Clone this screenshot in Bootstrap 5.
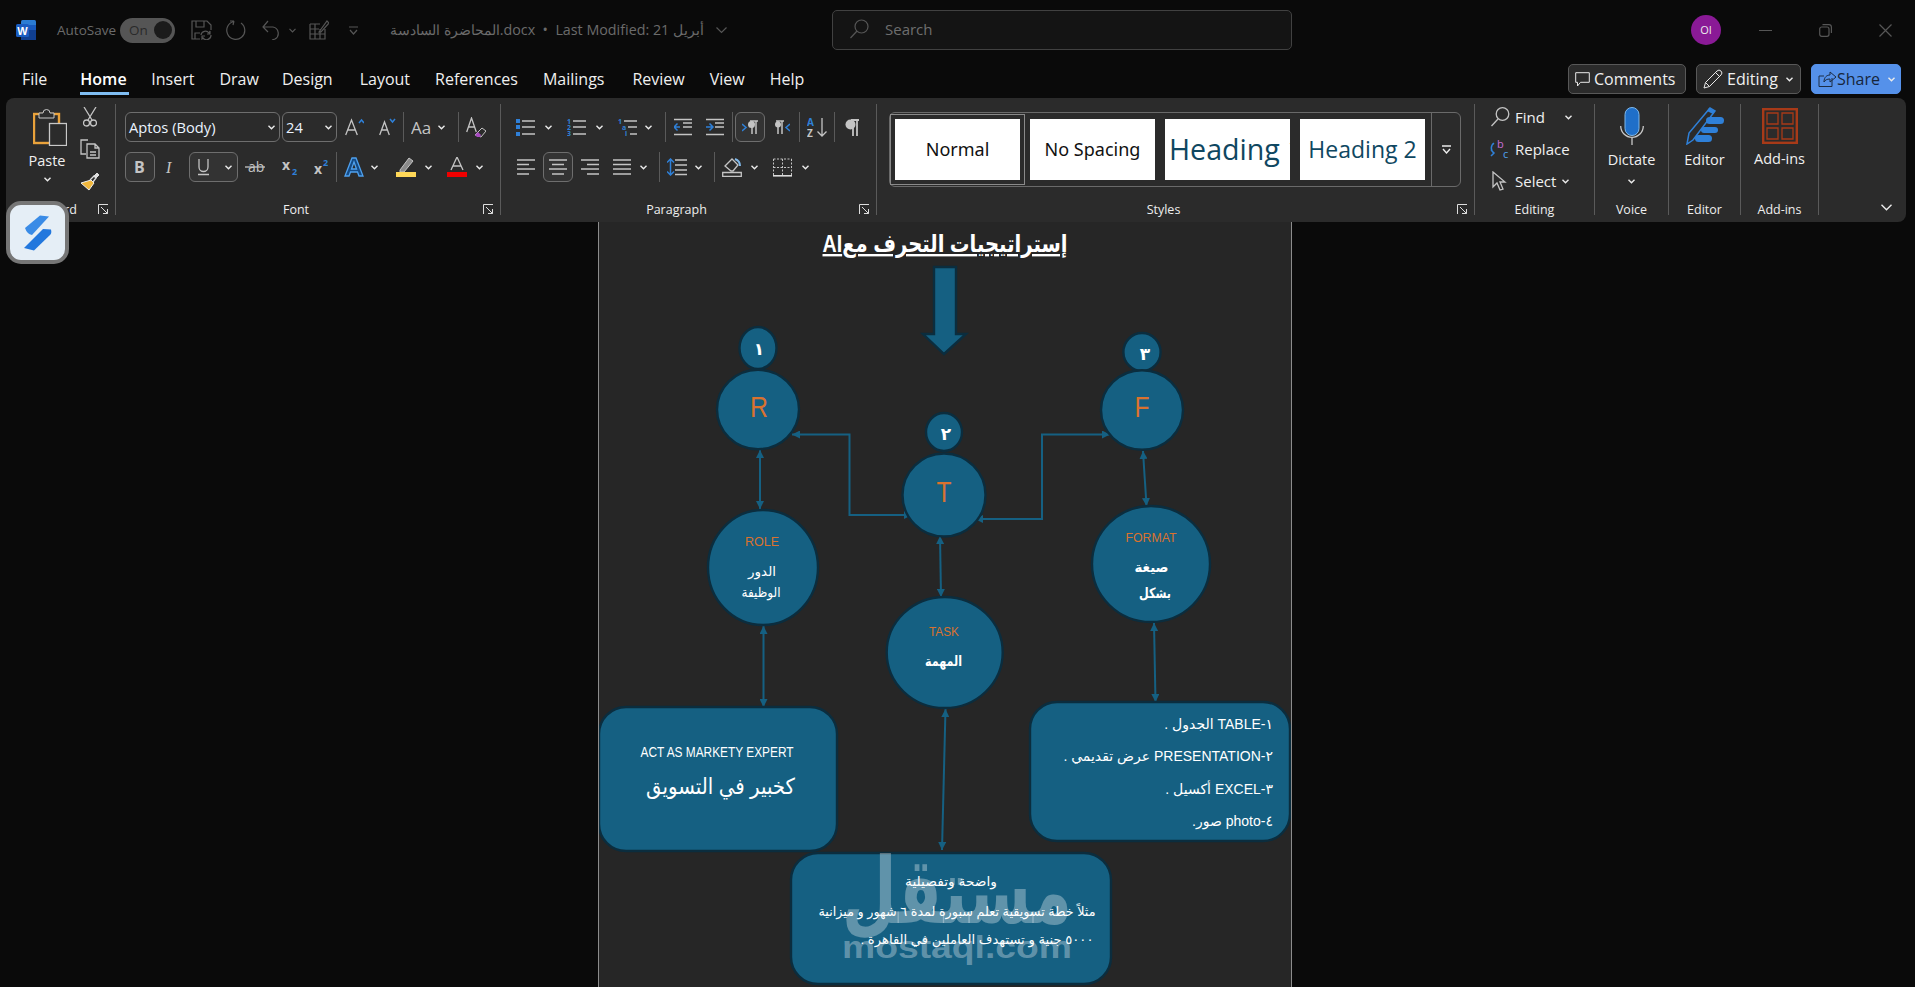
<!DOCTYPE html>
<html lang="en">
<head>
<meta charset="utf-8">
<title>Word</title>
<link href="https://cdn.jsdelivr.net/npm/bootstrap@5.3.0/dist/css/bootstrap.min.css" rel="stylesheet">
<style>
html,body{height:100%;overflow:hidden}
body{background:#0a0a0a;color:#f2f2f2;font-family:"Open Sans","Noto Sans",sans-serif;font-size:14px;position:relative}
svg{display:block;flex:none}
.titlebar{height:60px;padding-left:16px}
.dim{color:#6b6b6b;font-size:14.3px;white-space:nowrap}
.autosave{margin-left:21px;width:54px;font-size:13.5px}
.toggle{width:55px;height:25px;margin-left:9px;background:#555;border-radius:13px;color:#2a2a2a;font-size:13.5px;padding:0 3px 0 9px}
.knob{width:18px;height:18px;border-radius:50%;background:#1b1b1b}
.qat{stroke:#565656;fill:none;stroke-width:1.2}
.docname{margin-left:32px;width:326px;direction:ltr}
.searchbox{width:460px;height:40px;margin-left:105px;background:#141414;border:1px solid #414141;border-radius:5px;padding-left:16px;padding-bottom:2px;color:#6e6e6e;font-size:15px}
.avatar{width:30px;height:30px;border-radius:50%;background:#8a1a96;color:#ececec;font-size:11px;margin-left:399px}
.winmin{margin-left:38px}
.winmax,.winx{margin-left:47px}
.tabsrow{height:38px;padding-left:22px;padding-bottom:3px;padding-right:14px}
.wtab.nav-link{padding:0;margin-right:25px;color:#f0f0f0;font-size:16px;line-height:38px;height:35px}
.wtab.nav-link.tabfile{margin-right:33px}
.wtab.nav-link.tabdraw{margin-right:23px}
.wtab.nav-link.tabdes{margin-right:27px}
.wtab.nav-link.tabmail{margin-right:28px}
.wtab.nav-link.is-on{font-weight:600;color:#fff;border-bottom:3px solid #7fbdf2;width:49px;margin-right:22px}
.wbtn.btn{height:30px;margin-bottom:1px;padding:0 0 0 6px;background:#2b2b2b;border:1px solid #585858;border-radius:5px;color:#f0f0f0;font-size:16px;display:flex;align-items:center;margin-left:10px}
.bcomm.btn{width:118px}
.bedit.btn{width:105px}
.bshare.btn{width:90px;background:#5591ea;border-color:#5591ea;color:#17263b}
.wribbon{height:124px;margin:0 9px 0 6px;background:#2b2b2b;border-radius:8px;position:relative;z-index:2}
.rgroup{height:111px;margin-top:6px;border-right:1px solid #5a5a5a}
.gclip{width:110px}.gfont{width:385px}.gpara{width:376px}.gstyle{width:598px}.gfind{width:120px}.gvoice{width:74px}.geditor{width:72px}.gadd{width:78px}
.rbody{flex:1 1 0;min-height:0;padding-top:8px}
.rlabel{height:20px;font-size:12.5px;color:#eee;line-height:29px}
.launch{width:24px;padding-top:8px}
.rrow{height:30px}
.rrow+.rrow{margin-top:10px}
.pl9{padding-left:9px}.pl15{padding-left:15px}
.sepv{width:1px;height:30px;background:#5a5a5a;flex:none}
.fieldbox{height:30px;border:1px solid #6e6e6e;border-radius:6px;font-size:14.7px;padding:0 4px 0 3px;color:#eaf3ff}
.fname{width:155px}.fsize{width:55px}
.tog{width:30px;height:30px;border:1px solid #6e6e6e;border-radius:6px;background:#333;flex:none}
.tog2{width:49px;padding:0 5px 0 8px}
.gl{stroke:#c4c4c4;fill:none;stroke-width:1.3}
.gt{fill:#c4c4c4;font-family:"Open Sans",sans-serif}
.bl{stroke:#2f80d8;fill:none;stroke-width:1.5}
.bf{fill:#2f80d8}
.chev{stroke:#ececec;fill:none;stroke-width:1.4}
.txt14{font-size:15px;color:#f0f0f0}
.m1{margin-left:1px}.m2{margin-left:2px}.m5{margin-left:5px}.m6{margin-left:6px}.m7{margin-left:7px}.m8{margin-left:8px}.m9{margin-left:9px}.m10{margin-left:10px}.m12{margin-left:12px}.m13{margin-left:13px}.m14{margin-left:14px}.m15{margin-left:15px}.m16{margin-left:16px}.m17{margin-left:17px}.m18{margin-left:18px}.m20{margin-left:20px}.m22{margin-left:22px}
.clipbody{padding-top:3px}
.pasteCol{margin-left:21px;width:40px}
.pasteic{margin-left:6px;margin-top:1px}
.pastelab{margin-top:4px}
.pastech{margin-top:5px}
.clipCol{margin-left:13px}
.cutic{margin-left:3px}
.clipb{margin-top:12px}
.clipc{margin-top:13px}
.gallery{width:572px;height:75px;margin-left:12px;border:1px solid #6a6a6a;border-radius:6px;padding:6px 0 6px 5px;gap:10px}
.stylecell{width:125px;height:61px;background:#fff;color:#111;font-family:"Noto Sans",sans-serif;font-size:18px;overflow:hidden;white-space:nowrap;flex:none}
.stylecell.active{outline:1px solid #8a8a8a;outline-offset:4px}
.h1s{font-size:28.6px;color:#0f4761;font-family:"Open Sans",sans-serif}
.h2s{font-size:23px;color:#0f4761;font-family:"Open Sans",sans-serif}
.moregal{width:30px;height:73px;margin-left:-4px;margin-top:-6px;border-left:1px solid #6a6a6a}
.findbody{padding:0 0 0 15px;margin-top:-3px}
.linerow{height:32px}
.findt{width:28px}
.biglab{font-size:14.5px;color:#f0f0f0;line-height:22px}
.bigcol{padding-top:3px}
.addcol{padding-top:4px}
.collapse-wrap{flex:1 1 auto;padding:0 14px 11px 0}
.docarea{height:765px;padding-left:598px}
.docpage{width:694px;height:765px;background:#262626;border-left:1px solid #8c8c8c;border-right:1px solid #8c8c8c}
.floatlogo{position:absolute;left:6px;top:201px;width:63px;height:63px;background:#e5eef6;border:4px solid #767676;border-radius:15px;z-index:5}
.dg{font-family:"Liberation Sans","DejaVu Sans",sans-serif}
.node{fill:#156082;stroke:#0b2d3e;stroke-width:2.4}
.wire{stroke:#156082;stroke-width:2;fill:none}
.org{fill:#d9722f}
.wh{fill:#fff}
.rtl{direction:rtl}
.under{text-decoration:underline;text-decoration-thickness:3px}
.wm{fill:#fff;fill-opacity:.32;font-weight:700}
</style>
</head>
<body>
<svg width="0" height="0" class="position-absolute">
<defs>
<symbol id="cv" viewBox="0 0 7 5"><path class="chev" d="M.5.8 3.5 3.8 6.5.8"/></symbol>
<symbol id="launch" viewBox="0 0 11 11"><path d="M.5 10V.5H10" stroke="#ddd" fill="none"/><path d="M3 3 9.5 9.5M5 9.5H9.5V5" stroke="#ddd" fill="none"/></symbol>
</defs>
</svg>

<header class="titlebar d-flex align-items-center">
  <svg width="20" height="20" viewBox="0 0 20 20"><rect x="5" y="0" width="15" height="20" rx="1.5" fill="#2b7cd3"/><rect x="12" y="5" width="8" height="5" fill="#185abd"/><rect x="12" y="10" width="8" height="5" fill="#103f91"/><rect x="5" y="15" width="15" height="5" fill="#103f91"/><rect x="0" y="4" width="13" height="13" rx="1.5" fill="#1a5cc0"/><text x="6.5" y="14.5" text-anchor="middle" font-size="11" font-weight="700" fill="#fff" font-family="Liberation Sans">W</text></svg>
  <span class="dim autosave">AutoSave</span>
  <div class="toggle d-flex align-items-center justify-content-between"><span>On</span><span class="knob"></span></div>
  <svg class="m16" width="21" height="20" viewBox="0 0 21 20"><path class="qat" d="M9 19H1V1h15l4 4v5M5 1v6h8V1M4 19v-6h5M10 15a4.500 4.500 0 0 1 8-2l1-2v3h-3M20 15a4.500 4.500 0 0 1-8 3l-1 1v-3h3"/></svg>
  <svg class="m14" width="20" height="20" viewBox="0 0 20 20"><path class="qat" d="M8 1.500A9 9 0 1 0 15 3M8 1 4 1M8 1 7 5"/></svg>
  <svg class="m16" width="19" height="20" viewBox="0 0 19 20"><path class="qat" d="M1 7h10a6.500 6.500 0 0 1 2 12l-3 1M6 1 1 7l5 5"/></svg>
  <svg class="m8" width="7" height="5" viewBox="0 0 7 5"><path class="qat" d="M.5.8 3.500 3.800 6.500.8"/></svg>
  <svg class="m13" width="20" height="20" viewBox="0 0 20 20"><path class="qat" d="M1 4h10M1 4v15h15V9M1 9h9M1 14h15M6 4v15M11 9v10M10 12 18 1l2 2-8 9z"/></svg>
  <svg class="m20" width="9" height="9" viewBox="0 0 9 9"><path class="qat" d="M0 1h9M1 4l3.500 4L8 4"/></svg>
  <span class="dim docname">المحاضرة السادسة.docx&nbsp; •&nbsp; Last Modified: 21 أبريل</span>
  <svg width="11" height="7" viewBox="0 0 11 7"><path class="qat" d="M.5.500 5.500 5.500 10.500.500"/></svg>
  <div class="searchbox d-flex align-items-center"><svg width="20" height="20" viewBox="0 0 20 20"><circle cx="12.500" cy="7.500" r="6.500" class="qat"/><path class="qat" d="M8 12 1.500 19"/></svg><span class="ms-3">Search</span></div>
  <div class="avatar d-flex align-items-center justify-content-center">OI</div>
  <svg class="winmin" width="13" height="1" viewBox="0 0 13 1"><path class="qat" d="M0 .5h13"/></svg>
  <svg class="winmax" width="13" height="13" viewBox="0 0 13 13"><rect x=".7" y="3" width="9.300" height="9.300" rx="2" class="qat"/><path class="qat" d="M3.500 .7H10a2.500 2.500 0 0 1 2.400 2.400V9"/></svg>
  <svg class="winx" width="13" height="13" viewBox="0 0 13 13"><path class="qat" d="M.5.500l12 12M12.500.500l-12 12"/></svg>
</header>

<nav class="tabsrow d-flex align-items-end">
  <ul class="nav flex-nowrap flex-grow-1">
    <li class="nav-item"><a class="nav-link wtab tabfile">File</a></li>
    <li class="nav-item"><a class="nav-link wtab is-on">Home</a></li>
    <li class="nav-item"><a class="nav-link wtab">Insert</a></li>
    <li class="nav-item"><a class="nav-link wtab tabdraw">Draw</a></li>
    <li class="nav-item"><a class="nav-link wtab tabdes">Design</a></li>
    <li class="nav-item"><a class="nav-link wtab">Layout</a></li>
    <li class="nav-item"><a class="nav-link wtab">References</a></li>
    <li class="nav-item"><a class="nav-link wtab tabmail">Mailings</a></li>
    <li class="nav-item"><a class="nav-link wtab">Review</a></li>
    <li class="nav-item"><a class="nav-link wtab">View</a></li>
    <li class="nav-item"><a class="nav-link wtab">Help</a></li>
  </ul>
  <button class="btn wbtn bcomm" type="button"><svg width="15" height="15" viewBox="0 0 15 15" class="me-1"><path d="M.7.700h13.600v9.600H5.500L2.500 14V10.300H.7z" fill="none" stroke="#e8e8e8"/></svg>Comments</button>
  <button class="btn wbtn bedit" type="button"><svg width="20" height="20" viewBox="0 0 20 20" class="me-1"><path d="M1 19l1.500-5.500L14 2a2.500 2.500 0 0 1 4 4L6.500 17.500zM2.500 13.500l4 4M12.500 3.500l4 4" fill="none" stroke="#e8e8e8"/></svg>Editing<svg class="ms-2" width="7" height="5"><use href="#cv"/></svg></button>
  <button class="btn wbtn bshare" type="button"><svg width="19" height="18" viewBox="0 0 19 18"><path d="M14 8v8.500H1V6h5M6 12c0-5 3-7 6-7V2l6 5-6 5V9c-3 0-5 1-6 3z" fill="none" stroke="#1c2c44"/></svg>Share<svg class="ms-2" width="7" height="5"><use href="#cv"/></svg></button>
</nav>

<section class="wribbon d-flex">
  <!-- Clipboard -->
  <div class="rgroup gclip d-flex flex-column">
    <div class="rbody clipbody d-flex">
      <div class="d-flex flex-column align-items-center pasteCol">
        <svg class="pasteic" width="34" height="38" viewBox="0 0 34 38"><rect x="1" y="6" width="25" height="29" fill="none" stroke="#e9a23b" stroke-width="2.400"/><path d="M6 10V5h4a3.500 3.500 0 0 1 7 0h4v5z" fill="#2b2b2b" stroke="#c8c8c8"/><rect x="16.500" y="15.500" width="17" height="22" fill="#2b2b2b" stroke="#c8c8c8" stroke-width="1.300"/></svg>
        <span class="biglab pastelab">Paste</span>
        <svg class="pastech" width="7" height="5"><use href="#cv"/></svg>
      </div>
      <div class="d-flex flex-column clipCol">
        <svg class="cutic" width="14" height="20" viewBox="0 0 14 20"><path class="gl" d="M1 0 9 13M13 0 5 13"/><circle class="gl" cx="3.500" cy="16" r="3"/><circle class="gl" cx="10.500" cy="16" r="3"/></svg>
        <svg class="clipb" width="20" height="20" viewBox="0 0 20 20"><path class="gl" d="M8 1H1v14h5"/><path class="gl" d="M7 5h8l4 4v10H7zM15 5v4h4M10 13h6M10 16h6"/></svg>
        <svg class="clipc" width="20" height="19" viewBox="0 0 20 19"><path d="M1 11 11 8l3 3-5 7z" fill="#f0b73c" stroke="#eee"/><path d="M10 8l4-4 2 2-3 4" fill="none" stroke="#ddd" stroke-width="1.300"/><path d="M14 4l3-3 2 2-3 3" fill="#ddd" stroke="#ddd"/></svg>
      </div>
    </div>
    <div class="rlabel d-flex"><span class="flex-grow-1 text-center">Clipboard</span><span class="launch d-flex align-items-center justify-content-center"><svg width="11" height="11"><use href="#launch"/></svg></span></div>
  </div>
  <!-- Font -->
  <div class="rgroup gfont d-flex flex-column">
    <div class="rbody pl9">
      <div class="rrow d-flex align-items-center">
        <div class="fieldbox fname d-flex align-items-center justify-content-between"><span>Aptos (Body)</span><svg width="7" height="5"><use href="#cv"/></svg></div>
        <div class="fieldbox fsize m2 d-flex align-items-center justify-content-between"><span>24</span><svg width="7" height="5"><use href="#cv"/></svg></div>
        <svg class="m8" width="19" height="18" viewBox="0 0 19 18"><path class="gl" d="M.7 17 6.500 2 12.300 17M2.800 12h7.400"/><path class="bl" d="M14 5l2.500-3L19 5"/></svg>
        <svg class="m15" width="17" height="18" viewBox="0 0 17 18"><path class="gl" d="M.7 17 5.500 4 10.300 17M2.500 12h6"/><path class="bl" d="M11 1l2.500 3L16 1"/></svg>
        <span class="sepv m7"></span>
        <svg class="m7" width="21" height="15" viewBox="0 0 21 15"><text x="0" y="14" class="gt" font-size="17">Aa</text></svg>
        <svg class="m6" width="7" height="5"><use href="#cv"/></svg>
        <span class="sepv m13"></span>
        <svg class="m7" width="20" height="21" viewBox="0 0 20 21"><path class="gl" d="M.7 15 5.500 1 10.300 15M2.300 10h6.400"/><path d="M9 18l7-7 4 3-5 6z" fill="#2b2b2b" stroke="#c4c4c4"/><path d="M9 18l3-3 3 3-1 2h-3z" fill="#a74bc0"/></svg>
      </div>
      <div class="rrow d-flex align-items-center">
        <div class="tog d-flex align-items-center justify-content-center"><svg width="12" height="14" viewBox="0 0 12 14"><text x="0" y="13" font-size="16" font-weight="700" class="gt" font-family="Open Sans">B</text></svg></div>
        <svg class="m10" width="12" height="14" viewBox="0 0 12 14"><text x="1" y="13" font-size="16" font-style="italic" font-family="Liberation Serif" fill="#c4c4c4">I</text></svg>
        <div class="tog tog2 m12 d-flex align-items-center justify-content-between"><svg width="11" height="17" viewBox="0 0 11 17"><path class="gl" d="M1 0v8a4.500 4.500 0 0 0 9 0V0M0 15.500h11"/></svg><svg width="7" height="5"><use href="#cv"/></svg></div>
        <svg class="m7" width="20" height="14" viewBox="0 0 20 14"><text x="3" y="12" font-size="14" class="gt">ab</text><path class="gl" d="M0 7h20"/></svg>
        <svg class="m17" width="15" height="16" viewBox="0 0 15 16"><text x="0" y="11" font-size="14" font-weight="700" class="gt">x</text><text x="10" y="16" font-size="9" fill="#2f80d8" font-weight="700">2</text></svg>
        <svg class="m17" width="14" height="16" viewBox="0 0 14 16"><text x="0" y="15" font-size="14" font-weight="700" class="gt">x</text><text x="9" y="7" font-size="9" fill="#2f80d8" font-weight="700">2</text></svg>
        <span class="sepv m8"></span>
        <svg class="m7" width="20" height="20" viewBox="0 0 20 20"><path d="M1 19 8 1h4l7 18h-4l-1.500-4h-7L5 19zM7.500 12h5L10 5z" fill="#144a84" stroke="#4fa1ee" stroke-width="1.300"/></svg>
        <svg class="m7" width="7" height="5"><use href="#cv"/></svg>
        <svg class="m18" width="20" height="20" viewBox="0 0 20 20"><path d="M4 13 13 1l4 3-9 11H4z" fill="#8a8a8a" stroke="#c4c4c4"/><rect x="0" y="15" width="20" height="5" fill="#ffd858"/></svg>
        <svg class="m9" width="7" height="5"><use href="#cv"/></svg>
        <svg class="m15" width="20" height="20" viewBox="0 0 20 20"><path class="gl" d="M4 13 10 0l6 13M6 9h8"/><rect x="0" y="15" width="20" height="5" fill="#f00000"/></svg>
        <svg class="m9" width="7" height="5"><use href="#cv"/></svg>
      </div>
    </div>
    <div class="rlabel d-flex"><span class="flex-grow-1 text-center">Font</span><span class="launch d-flex align-items-center justify-content-center"><svg width="11" height="11"><use href="#launch"/></svg></span></div>
  </div>
  <!-- Paragraph -->
  <div class="rgroup gpara d-flex flex-column">
    <div class="rbody pl15">
      <div class="rrow d-flex align-items-center">
        <svg width="19" height="18" viewBox="0 0 19 18"><rect y="1" width="4" height="4" class="bf"/><rect y="7" width="4" height="4" class="bf"/><rect y="14" width="4" height="4" class="bf"/><path class="gl" d="M6 3h13M6 9h13M6 16h13"/></svg>
        <svg class="m10" width="7" height="5"><use href="#cv"/></svg>
        <svg class="m15" width="19" height="18" viewBox="0 0 19 18"><text x="0" y="6" font-size="7" class="bf" font-weight="700">1</text><text x="0" y="12" font-size="7" class="bf" font-weight="700">2</text><text x="0" y="18" font-size="7" class="bf" font-weight="700">3</text><path class="gl" d="M6 3h13M6 9h13M6 16h13"/></svg>
        <svg class="m10" width="7" height="5"><use href="#cv"/></svg>
        <svg class="m15" width="19" height="18" viewBox="0 0 19 18"><text x="0" y="6" font-size="7" class="bf" font-weight="700">1</text><text x="4" y="12" font-size="7" class="bf" font-weight="700">a</text><text x="7" y="18" font-size="7" class="bf" font-weight="700">i</text><path class="gl" d="M6 3h13M10 9h9M12 16h7"/></svg>
        <svg class="m8" width="7" height="5"><use href="#cv"/></svg>
        <span class="sepv m13"></span>
        <svg class="m8" width="18" height="18" viewBox="0 0 18 18"><path class="gl" d="M0 1.500h18M9 9h9M0 16.500h18M9 5h9"/><path class="bl" d="M0 9h6M3.500 5.500 0 9l3.500 3.500"/></svg>
        <svg class="m14" width="18" height="18" viewBox="0 0 18 18"><path class="gl" d="M0 1.500h18M9 9h9M0 16.500h18M9 5h9"/><path class="bl" d="M0 9h7M3.500 5.500 7 9l-3.500 3.500"/></svg>
        <span class="sepv m8"></span>
        <div class="tog m2 d-flex align-items-center justify-content-center"><svg width="16" height="15" viewBox="0 0 16 15"><path class="bl" d="M0 4l4 3.500L0 11"/><path d="M8 1h8M10 1v13M14 1v13" stroke="#c4c4c4" stroke-width="1.500" fill="none"/><circle cx="9.500" cy="4.500" r="3.500" fill="#c4c4c4"/></svg></div>
        <svg class="m10" width="15" height="15" viewBox="0 0 15 15"><path d="M1 1h8M3 1v13M7 1v13" stroke="#c4c4c4" stroke-width="1.500" fill="none"/><circle cx="3" cy="4.500" r="3" fill="#c4c4c4"/><path class="bl" d="M15 4l-4 3.500L15 11"/></svg>
        <span class="sepv m9"></span>
        <svg class="m7" width="20" height="20" viewBox="0 0 20 20"><text x="0" y="9" font-size="10" class="bf" font-weight="700">A</text><text x="0" y="20" font-size="10" fill="#c4c4c4" font-weight="700">Z</text><path class="gl" d="M15 1v18M10.500 14.500 15 19l4.500-4.500"/></svg>
        <span class="sepv m7"></span>
        <svg class="m10" width="14" height="17" viewBox="0 0 14 17"><path d="M6 1h8M8 1v16M12 1v16" stroke="#c4c4c4" stroke-width="1.800" fill="none"/><circle cx="5.500" cy="5.500" r="5" fill="#c4c4c4"/></svg>
      </div>
      <div class="rrow d-flex align-items-center">
        <svg class="m1" width="18" height="16" viewBox="0 0 18 16"><path class="gl" d="M0 1h18M0 5.500h12M0 10h18M0 15h12"/></svg>
        <div class="tog m8 d-flex align-items-center justify-content-center"><svg width="18" height="16" viewBox="0 0 18 16"><path class="gl" d="M0 1h18M3 5.500h12M0 10h18M3 15h12"/></svg></div>
        <svg class="m8" width="18" height="16" viewBox="0 0 18 16"><path class="gl" d="M0 1h18M6 5.500h12M0 10h18M6 15h12"/></svg>
        <svg class="m14" width="18" height="16" viewBox="0 0 18 16"><path class="gl" d="M0 1h18M0 5.500h18M0 10h18M0 15h18"/></svg>
        <svg class="m9" width="7" height="5"><use href="#cv"/></svg>
        <span class="sepv m12"></span>
        <svg class="m7" width="20" height="18" viewBox="0 0 20 18"><path class="gl" d="M8 2h12M8 7h12M8 12h12M8 16.500h12"/><path class="bl" d="M3.500 1v16M0 4.500 3.500 1 7 4.500M0 13.500 3.500 17 7 13.500"/></svg>
        <svg class="m8" width="7" height="5"><use href="#cv"/></svg>
        <span class="sepv m12"></span>
        <svg class="m7" width="20" height="20" viewBox="0 0 20 20"><path class="gl" d="M3 9l7-7 6 6-5 6H9z"/><path d="M13 2c3 1 5 3 5 7" stroke="#7fb8ea" stroke-width="2" fill="none"/><path class="gl" d="M.7 15.500h18.600v4H.7z"/></svg>
        <svg class="m9" width="7" height="5"><use href="#cv"/></svg>
        <svg class="m15" width="19" height="19" viewBox="0 0 19 19"><path d="M.5 1h18M.5 1v17M18.500 1v17M9.500 1v17M.5 9.500h18" stroke="#c4c4c4" stroke-dasharray="2 1.500" fill="none"/><path d="M0 17.800h19" stroke="#ddd" stroke-width="1.600"/></svg>
        <svg class="m10" width="7" height="5"><use href="#cv"/></svg>
      </div>
    </div>
    <div class="rlabel d-flex"><span class="flex-grow-1 text-center">Paragraph</span><span class="launch d-flex align-items-center justify-content-center"><svg width="11" height="11"><use href="#launch"/></svg></span></div>
  </div>
  <!-- Styles -->
  <div class="rgroup gstyle d-flex flex-column">
    <div class="rbody">
      <div class="gallery d-flex">
        <div class="stylecell active d-flex align-items-center justify-content-center">Normal</div>
        <div class="stylecell d-flex align-items-center justify-content-center">No Spacing</div>
        <div class="stylecell h1s d-flex align-items-center ps-1">Heading 1</div>
        <div class="stylecell h2s d-flex align-items-center justify-content-center">Heading 2</div>
        <div class="moregal d-flex align-items-center justify-content-center"><svg width="9" height="9" viewBox="0 0 9 9"><path class="chev" d="M0 1h9M1 4l3.500 4L8 4"/></svg></div>
      </div>
    </div>
    <div class="rlabel d-flex"><span class="flex-grow-1 text-center">Styles</span><span class="launch d-flex align-items-center justify-content-center"><svg width="11" height="11"><use href="#launch"/></svg></span></div>
  </div>
  <!-- Editing -->
  <div class="rgroup gfind d-flex flex-column">
    <div class="rbody findbody">
      <div class="linerow d-flex align-items-center txt14"><svg width="20" height="20" viewBox="0 0 20 20"><circle cx="12.500" cy="7" r="6.300" class="gl"/><path class="gl" d="M8 12 1.500 19"/></svg><span class="m5 findt">Find</span><svg class="m22" width="7" height="5"><use href="#cv"/></svg></div>
      <div class="linerow d-flex align-items-center txt14"><svg width="20" height="20" viewBox="0 0 20 20"><text x="7" y="9" font-size="11" fill="#c86dd7">b</text><text x="13" y="19" font-size="11" fill="#4fa1ee">c</text><path class="bl" d="M4 4a6 6 0 0 0 0 10M1 11l3 3-3 3" /></svg><span class="m5">Replace</span></div>
      <div class="linerow d-flex align-items-center txt14"><svg width="20" height="20" viewBox="0 0 20 20"><path class="gl" d="M3 1v15l4-4 3 7 3-1-3-7h5z"/></svg><span class="m5">Select</span><svg class="m6" width="7" height="5"><use href="#cv"/></svg></div>
    </div>
    <div class="rlabel text-center">Editing</div>
  </div>
  <!-- Voice -->
  <div class="rgroup gvoice d-flex flex-column">
    <div class="rbody bigcol d-flex flex-column align-items-center">
      <svg width="24" height="38" viewBox="0 0 24 38"><rect x="5" y=".5" width="14" height="28" rx="7" fill="#1f6fc9" stroke="#7fb8ea"/><path d="M.7 19a11.300 11.300 0 0 0 22.600 0M12 31v7" fill="none" stroke="#c8c8c8" stroke-width="1.300"/></svg>
      <span class="biglab mt-1">Dictate</span>
      <svg class="mt-2" width="7" height="5"><use href="#cv"/></svg>
    </div>
    <div class="rlabel text-center">Voice</div>
  </div>
  <!-- Editor -->
  <div class="rgroup geditor d-flex flex-column">
    <div class="rbody bigcol d-flex flex-column align-items-center">
      <svg width="38" height="38" viewBox="0 0 38 38"><path d="M1 37 3 26 24 1l5 3L7 33z" fill="none" stroke="#2f80d8" stroke-width="1.500"/><path d="M21 4l2-3 6 3-2 3z" fill="#2f80d8"/><rect x="20" y="10" width="18" height="7" rx="3.500" fill="#2f80d8"/><rect x="15" y="20" width="17" height="6" rx="3" fill="#2f80d8"/><rect x="9" y="28" width="17" height="7" rx="3.500" fill="#2f80d8"/></svg>
      <span class="biglab mt-1">Editor</span>
    </div>
    <div class="rlabel text-center">Editor</div>
  </div>
  <!-- Add-ins -->
  <div class="rgroup gadd d-flex flex-column">
    <div class="rbody addcol d-flex flex-column align-items-center">
      <svg width="36" height="36" viewBox="0 0 36 36"><rect x="1.200" y="1.200" width="33.600" height="33.600" fill="none" stroke="#a83a18" stroke-width="2.400"/><path d="M5 5h11v11H5zM20 5h11v11H20zM5 20h11v11H5zM20 20h11v11H20z" fill="none" stroke="#a83a18" stroke-width="1.300"/></svg>
      <span class="biglab mt-1">Add-ins</span>
    </div>
    <div class="rlabel text-center">Add-ins</div>
  </div>
  <div class="collapse-wrap d-flex align-items-end justify-content-end"><svg width="11" height="7" viewBox="0 0 11 7"><path class="chev" d="M.5.800 5.500 5.800 10.500.800"/></svg></div>
</section>

<div class="floatlogo d-flex align-items-center justify-content-center">
  <svg width="28" height="36" viewBox="0 0 28 36"><path d="M16 .5 25 1.500 8 20Q3 19 1 13z" fill="#3a8be6"/><path d="M19 14 27 14.500Q28 18 26 20L10 35.500 0 33z" fill="#2277dd"/></svg>
</div>

<main class="docarea">
  <div class="docpage">
    <svg width="692" height="765" viewBox="599 223 692 765" class="dg">
      <defs>
        <marker id="ah" markerUnits="userSpaceOnUse" markerWidth="9" markerHeight="8" refX="8" refY="4" orient="auto"><path d="M0 0 8 4 0 8z" fill="#156082"/></marker>
        <marker id="at" markerUnits="userSpaceOnUse" markerWidth="9" markerHeight="8" refX="1" refY="4" orient="auto"><path d="M9 0 1 4 9 8z" fill="#156082"/></marker>
      </defs>
      <text x="945" y="253" text-anchor="middle" class="rtl under wh" font-size="24" font-weight="700" textLength="245" lengthAdjust="spacingAndGlyphs">إستراتيجيات التحرف معAI</text>
      <path class="node" d="M934 268h22v67h10l-22 20-21-20h11z"/>

      <path class="wire" d="M760 451V510" marker-start="url(#at)" marker-end="url(#ah)"/>
      <path class="wire" d="M1143 452 1146.500 507" marker-start="url(#at)" marker-end="url(#ah)"/>
      <path class="wire" d="M912 516H849.500V435.500H792" marker-start="url(#at)" marker-end="url(#ah)"/>
      <path class="wire" d="M975 520H1042V435.500H1110" marker-start="url(#at)" marker-end="url(#ah)"/>
      <path class="wire" d="M940 537 941 598" marker-start="url(#at)" marker-end="url(#ah)"/>
      <path class="wire" d="M763.500 627V708" marker-start="url(#at)" marker-end="url(#ah)"/>
      <path class="wire" d="M1154 624 1155.500 703" marker-start="url(#at)" marker-end="url(#ah)"/>
      <path class="wire" d="M945.500 710 942 851" marker-start="url(#at)" marker-end="url(#ah)"/>

      <ellipse class="node" cx="758" cy="349" rx="18.500" ry="21"/>
      <ellipse class="node" cx="758" cy="410.500" rx="41" ry="39.700"/>
      <ellipse class="node" cx="1142" cy="353" rx="18.600" ry="19"/>
      <ellipse class="node" cx="1142" cy="411" rx="41" ry="39.700"/>
      <ellipse class="node" cx="944" cy="433" rx="18" ry="19"/>
      <ellipse class="node" cx="944" cy="496" rx="41.500" ry="41.500"/>
      <ellipse class="node" cx="763" cy="568.500" rx="55" ry="57.500"/>
      <ellipse class="node" cx="1151" cy="565" rx="59" ry="58"/>
      <ellipse class="node" cx="944.700" cy="653.500" rx="58" ry="55.500"/>
      <rect class="node" x="599" y="708" width="238" height="144" rx="27"/>
      <rect class="node" x="1030" y="703" width="260" height="139" rx="27"/>
      <rect class="node" x="791" y="854" width="320" height="131" rx="27"/>

      <text x="759" y="356" text-anchor="middle" class="wh" font-size="17" font-weight="700">١</text>
      <text x="1145" y="361" text-anchor="middle" class="wh" font-size="17" font-weight="700">٣</text>
      <text x="946" y="441" text-anchor="middle" class="wh" font-size="17" font-weight="700">٢</text>
      <text x="759" y="418" text-anchor="middle" class="org" font-size="30" textLength="18" lengthAdjust="spacingAndGlyphs">R</text>
      <text x="1142" y="418" text-anchor="middle" class="org" font-size="30" textLength="15" lengthAdjust="spacingAndGlyphs">F</text>
      <text x="944" y="503" text-anchor="middle" class="org" font-size="30" textLength="15" lengthAdjust="spacingAndGlyphs">T</text>
      <text x="762" y="547" text-anchor="middle" class="org" font-size="13" textLength="34" lengthAdjust="spacingAndGlyphs">ROLE</text>
      <text x="762" y="577" text-anchor="middle" class="wh rtl" font-size="13" textLength="28" lengthAdjust="spacingAndGlyphs">الدور</text>
      <text x="761" y="598" text-anchor="middle" class="wh rtl" font-size="13" textLength="39" lengthAdjust="spacingAndGlyphs">الوظيفة</text>
      <text x="1151" y="543" text-anchor="middle" class="org" font-size="13" textLength="51" lengthAdjust="spacingAndGlyphs">FORMAT</text>
      <text x="1151.500" y="573" text-anchor="middle" class="wh rtl" font-size="14" font-weight="700" textLength="34" lengthAdjust="spacingAndGlyphs">صيغة</text>
      <text x="1155" y="599" text-anchor="middle" class="wh rtl" font-size="14" font-weight="700" textLength="32" lengthAdjust="spacingAndGlyphs">بشكل</text>
      <text x="944" y="637" text-anchor="middle" class="org" font-size="13" textLength="30" lengthAdjust="spacingAndGlyphs">TASK</text>
      <text x="943.500" y="667" text-anchor="middle" class="wh rtl" font-size="14" font-weight="700" textLength="37" lengthAdjust="spacingAndGlyphs">المهمة</text>

      <text x="717" y="758" text-anchor="middle" class="wh" font-size="14" textLength="153" lengthAdjust="spacingAndGlyphs">ACT AS MARKETY EXPERT</text>
      <text x="720.500" y="795" text-anchor="middle" class="wh rtl" font-size="22" textLength="149" lengthAdjust="spacingAndGlyphs">كخبير في التسويق</text>

      <text x="1273" y="730" class="wh rtl" font-size="14">١-TABLE الجدول .</text>
      <text x="1273" y="762" class="wh rtl" font-size="14">٢-PRESENTATION عرض تقديمي .</text>
      <text x="1273" y="795" class="wh rtl" font-size="14">٣-EXCEL أكسيل .</text>
      <text x="1273" y="827" class="wh rtl" font-size="14">٤-photo صور.</text>

      <text x="951" y="887" text-anchor="middle" class="wh rtl" font-size="13" textLength="92" lengthAdjust="spacingAndGlyphs">واضحة وتفصيلية</text>
      <text x="957" y="917" text-anchor="middle" class="wh rtl" font-size="13" textLength="277" lengthAdjust="spacingAndGlyphs">مثلاً خطة تسويقية تعلم سبورة لمدة ٦ شهور و ميزانية</text>
      <text x="977" y="945" text-anchor="middle" class="wh rtl" font-size="13" textLength="233" lengthAdjust="spacingAndGlyphs">٥٠٠٠ جنية و تستهدف العاملين في القاهرة .</text>

      <text x="957" y="924" text-anchor="middle" class="wm rtl" font-size="92" textLength="230" lengthAdjust="spacingAndGlyphs">مستقل</text>
      <text x="957" y="959" text-anchor="middle" class="wm" font-size="31" textLength="230" lengthAdjust="spacingAndGlyphs">mostaql.com</text>
    </svg>
  </div>
</main>
<script src="https://cdn.jsdelivr.net/npm/bootstrap@5.3.0/dist/js/bootstrap.bundle.min.js"></script>
</body>
</html>
